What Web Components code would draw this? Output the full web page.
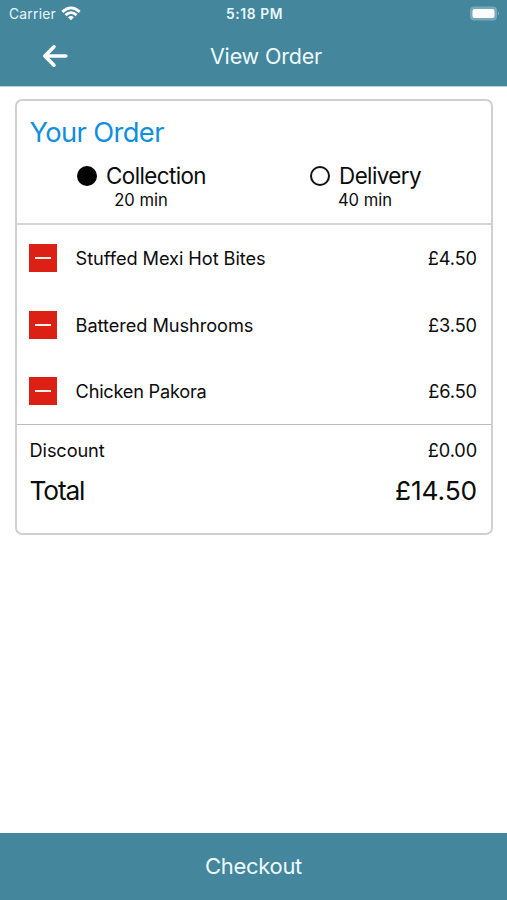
<!DOCTYPE html>
<html lang="en">
<head>
<meta charset="utf-8">
<title>View Order</title>
<style>
html,body{margin:0;height:100%;background:#fff}
body{font-family:Inter,"Liberation Sans",sans-serif;color:#0c0c0c;overflow:hidden}
</style>
</head>
<body>
<order-app>
  <status-bar slot="top" carrier="Carrier" time="5:18 PM"></status-bar>
  <nav-bar slot="top">View Order</nav-bar>
  <order-card>
    <span slot="title">Your Order</span>
    <order-option slot="options" selected wait="20 min">Collection</order-option>
    <order-option slot="options" wait="40 min">Delivery</order-option>
    <order-item price="£4.50">Stuffed Mexi Hot Bites</order-item>
    <order-item price="£3.50">Battered Mushrooms</order-item>
    <order-item price="£6.50" style="--track:-.24px">Chicken Pakora</order-item>
    <summary-row slot="summary" value="£0.00">Discount</summary-row>
    <summary-row slot="summary" value="£14.50" total>Total</summary-row>
  </order-card>
  <checkout-bar slot="bottom">Checkout</checkout-bar>
</order-app>
<script>
const define = (name, render) => customElements.define(name, class extends HTMLElement {
  constructor() {
    super();
    this.attachShadow({ mode: 'open' }).innerHTML = render(this);
  }
});

define('order-app', () => `
<style>
:host{display:flex;flex-direction:column;height:100vh;background:#fff}
header{background:#44869c;border-bottom:1px solid #b5d0d9;box-sizing:border-box;height:87px;flex:none}
main{flex:1;padding:12px 14px 0 15px}
</style>
<header><slot name="top"></slot></header>
<main><slot></slot></main>
<slot name="bottom"></slot>`);

define('status-bar', el => `
<style>
:host{display:grid;grid-template-columns:1fr auto 1fr;align-items:center;height:28px;padding:0 7px 0 9px;color:#e8f8fd;font-size:13.8px;line-height:28px}
.left{display:flex;align-items:center;gap:5px;letter-spacing:.25px}
.time{font-size:13.8px;font-weight:600;letter-spacing:.6px}
.battery{justify-self:end}
svg{display:block}
.left svg{margin-top:-2px}
</style>
<span class="left"><span>${el.getAttribute('carrier')}</span>
<svg width="20" height="15" viewBox="0 0 20 15" fill="none" stroke="#fff" stroke-width="2.8"><path d="M1.3 5.9Q10-2.1 18.7 5.9M4.5 9.1Q10 4.1 15.5 9.1"/><path d="M7 11.2Q10 8.7 13 11.2L10 14.3Z" fill="#fff" stroke="none"/></svg></span>
<span class="time">${el.getAttribute('time')}</span>
<svg class="battery" width="31" height="16" viewBox="0 0 31 16"><rect x="1" y=".5" width="27" height="14" rx="4" fill="#76a9bb"/><rect x="3.5" y="3" width="22" height="9" rx="2" fill="#fff"/><path d="M29 5.5Q31 7.5 29 9.5Z" fill="#8bb7c6"/></svg>`);

define('nav-bar', () => `
<style>
:host{display:grid;grid-template-columns:1fr auto 1fr;align-items:center;height:56px;padding:0 17px 0 42px;color:#edfaff;font-size:21.5px;line-height:56px}
.title{letter-spacing:-.17px}
svg{display:block}
</style>
<svg width="27" height="24" viewBox="0 0 27 24" fill="none" stroke="#fff" stroke-width="3.6" stroke-linecap="round" stroke-linejoin="round"><path d="M12 2.8 2.8 12 12 21.2M2.8 12H23.8"/></svg>
<span class="title"><slot></slot></span><span></span>`);

define('order-card', () => `
<style>
:host{display:block;box-sizing:border-box;height:436px;border:2px solid #d0d0d0;border-radius:7px;background:#fff}
.head{height:122px;border-bottom:2px solid #d4d4d4}
h1{margin:0;padding:13px 13px 0 12.5px;font-size:27.3px;font-weight:400;line-height:37px;color:#128ee0;letter-spacing:-.62px}
.options{display:grid;grid-template-columns:249px 199px;padding-top:11px}
.items{height:200px;border-bottom:1px solid #bcbcbc;box-sizing:border-box}
</style>
<section class="head"><h1><slot name="title"></slot></h1><div class="options"><slot name="options"></slot></div></section>
<section class="items"><slot></slot></section>
<section><slot name="summary"></slot></section>`);

define('order-option', el => `
<style>
:host{display:flex;flex-direction:column;align-items:center}
.row{display:flex;align-items:center;gap:9px;height:28px;font-size:22.4px;line-height:28px}
.radio{box-sizing:border-box;width:20px;height:20px;border:2px solid #111;border-radius:50%}
:host([selected]) .radio{background:#000;border-color:#000}
.name{letter-spacing:-.6px}
.wait{font-size:16.6px;line-height:20px;margin-right:1px}
</style>
<span class="row"><span class="radio"></span><span class="name"><slot></slot></span></span>
<span class="wait">${el.getAttribute('wait')}</span>`);

define('order-item', el => `
<style>
:host{display:flex;align-items:center;height:66.6px;padding:0 14px 0 12px;font-size:18.2px}
.remove{width:28px;height:28px;padding:0;border:0;background:#dc2114;display:grid;place-items:center;margin-right:18.6px}
.remove::before{content:"";width:16px;height:2px;background:#fff0e9}
.name{flex:1;letter-spacing:var(--track,-.06px)}
.price{letter-spacing:-.1px}
</style>
<button class="remove" aria-label="Remove item"></button>
<span class="name"><slot></slot></span><span class="price">${el.getAttribute('price')}</span>`);

define('summary-row', el => `
<style>
:host{display:flex;justify-content:space-between;align-items:center;height:34px;padding:8px 14px 0 12.6px;font-size:18.2px;line-height:34px;letter-spacing:-.12px}
:host([total]){font-size:26.3px;height:40px;padding-top:4px;line-height:40px}
:host([total]) .label{letter-spacing:-1.2px}
</style>
<span class="label"><slot></slot></span><span>${el.getAttribute('value')}</span>`);

define('checkout-bar', () => `
<style>
:host{display:block;flex:none;height:67px;background:#44869c;color:#edfaff;text-align:center;font-size:22px;line-height:67px;letter-spacing:-.3px}
</style>
<slot></slot>`);
</script>
</body>
</html>
